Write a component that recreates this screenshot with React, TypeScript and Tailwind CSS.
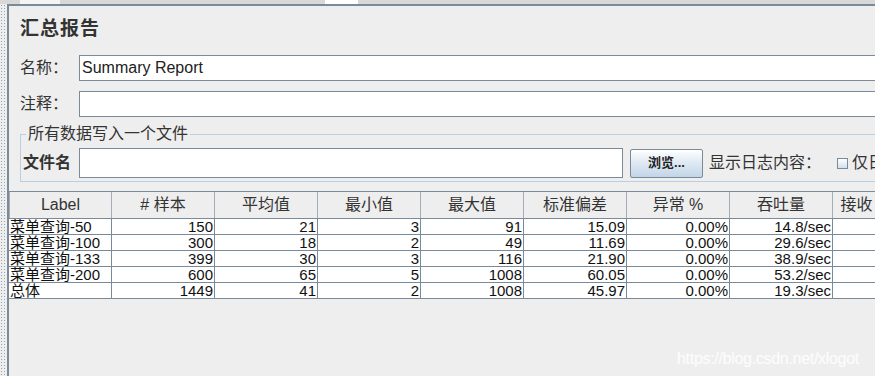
import React from 'react';

const columns = ['Label', '# 样本', '平均值', '最小值', '最大值', '标准偏差', '异常 %', '吞吐量', '接收 KB/sec'];

const rows: string[][] = [
  ['菜单查询-50', '150', '21', '3', '91', '15.09', '0.00%', '14.8/sec', ''],
  ['菜单查询-100', '300', '18', '2', '49', '11.69', '0.00%', '29.6/sec', ''],
  ['菜单查询-133', '399', '30', '3', '116', '21.90', '0.00%', '38.9/sec', ''],
  ['菜单查询-200', '600', '65', '5', '1008', '60.05', '0.00%', '53.2/sec', ''],
  ['总体', '1449', '41', '2', '1008', '45.97', '0.00%', '19.3/sec', ''],
];

const font = "font-['Liberation_Sans','Noto_Sans_CJK_SC',sans-serif]";

const App: React.FC = () => {
  return (
    <div className={`relative w-[875px] h-[376px] overflow-hidden bg-[#eeeeee] text-[#333333] ${font}`}>
      {/* strip of the tab bar above */}
      <div className="flex h-[4px] bg-[#d8d8d8]">
        <div className="w-[20px]" />
        <div className="w-[40px] bg-[#f4f4f4]" />
        <div className="w-[265px]" />
        <div className="w-[33px] bg-white" />
      </div>

      <div className="flex h-[372px]">
        {/* split pane grip */}
        <div className="w-[7px] shrink-0 bg-[radial-gradient(circle,#8ea2b8_0.7px,transparent_1px)] bg-[length:3px_3px]" />

        <div className="flex-1 min-w-0 border-l-2 border-t-2 border-[#7a8a99] flex flex-col">
          <div className="pl-[11px] pt-[11px]">
            <div className="text-[19px] leading-[24px] font-bold tracking-[1px]">汇总报告</div>

            <div className="flex items-center mt-[14px] h-[26px]">
              <span className="w-[59px] shrink-0 text-[16px]">名称：</span>
              <div className="w-[820px] h-[26px] shrink-0 bg-white border border-[#7a8a99] flex items-center pl-[2px] text-[16px] text-[#222]">
                Summary Report
              </div>
            </div>

            <div className="flex items-center mt-[10px] h-[26px]">
              <span className="w-[59px] shrink-0 text-[16px]">注释：</span>
              <div className="w-[820px] h-[26px] shrink-0 bg-white border border-[#7a8a99]" />
            </div>

            <fieldset className="mt-[8px] w-[900px] border border-[#b8cfe5] pl-[2px] pb-[3px] pt-[5px]">
              <legend className="ml-[3px] px-[2px] text-[16px] leading-[18px]">所有数据写入一个文件</legend>
              <div className="flex items-center h-[30px]">
                <span className="w-[56px] shrink-0 text-[16px] font-bold">文件名</span>
                <div className="w-[544px] h-[30px] shrink-0 bg-white border border-[#7a8a99]" />
                <button className="ml-[7px] w-[73px] h-[29px] shrink-0 border border-[#7a8a99] rounded-[2px] bg-[linear-gradient(#ffffff,#dde8f3_50%,#c3d5e8)] text-[13px] font-bold text-[#222]">
                  浏览...
                </button>
                <span className="ml-[6px] text-[16px] shrink-0">显示日志内容：</span>
                <span className="ml-[16px] w-[11px] h-[11px] shrink-0 border border-[#7a8a99] bg-[linear-gradient(#ffffff,#d2dfed)]" />
                <span className="ml-[4px] text-[16px] shrink-0">仅日志错误</span>
              </div>
            </fieldset>
          </div>

          <div className="mt-[9px] w-[930px] border-t border-[#7a8a99]">
            <div className="grid grid-cols-[103px_103px_103px_103px_103px_103px_103px_103px_103px] h-[27px] bg-[#eeeeee] border-b border-[#7a8a99]">
              {columns.map((c, i) => (
                <div
                  key={c}
                  className={`flex items-center justify-center text-[16px] border-r border-[#a4adb6] ${i === 0 ? 'border-l' : ''}`}
                >
                  {c}
                </div>
              ))}
            </div>
            {rows.map((r) => (
              <div
                key={r[0]}
                className="grid grid-cols-[103px_103px_103px_103px_103px_103px_103px_103px_103px] h-[16px] bg-white border-b border-[#7a8a99]"
              >
                {r.map((v, i) => (
                  <div
                    key={i}
                    className={`border-r border-[#7a8a99] text-[15px] leading-[15px] text-[#111] whitespace-nowrap overflow-hidden ${
                      i === 0 ? 'text-left pl-[1px]' : 'text-right pr-[1px]'
                    }`}
                  >
                    {v}
                  </div>
                ))}
              </div>
            ))}
          </div>
        </div>
      </div>

      {/* watermark */}
      <div className="absolute left-[677px] top-[347px] text-[16px] text-white/85 font-['Liberation_Sans_Narrow','Liberation_Sans',sans-serif] tracking-[-0.3px]">
        https://blog.csdn.net/xlogot
      </div>
    </div>
  );
};

export default App;
